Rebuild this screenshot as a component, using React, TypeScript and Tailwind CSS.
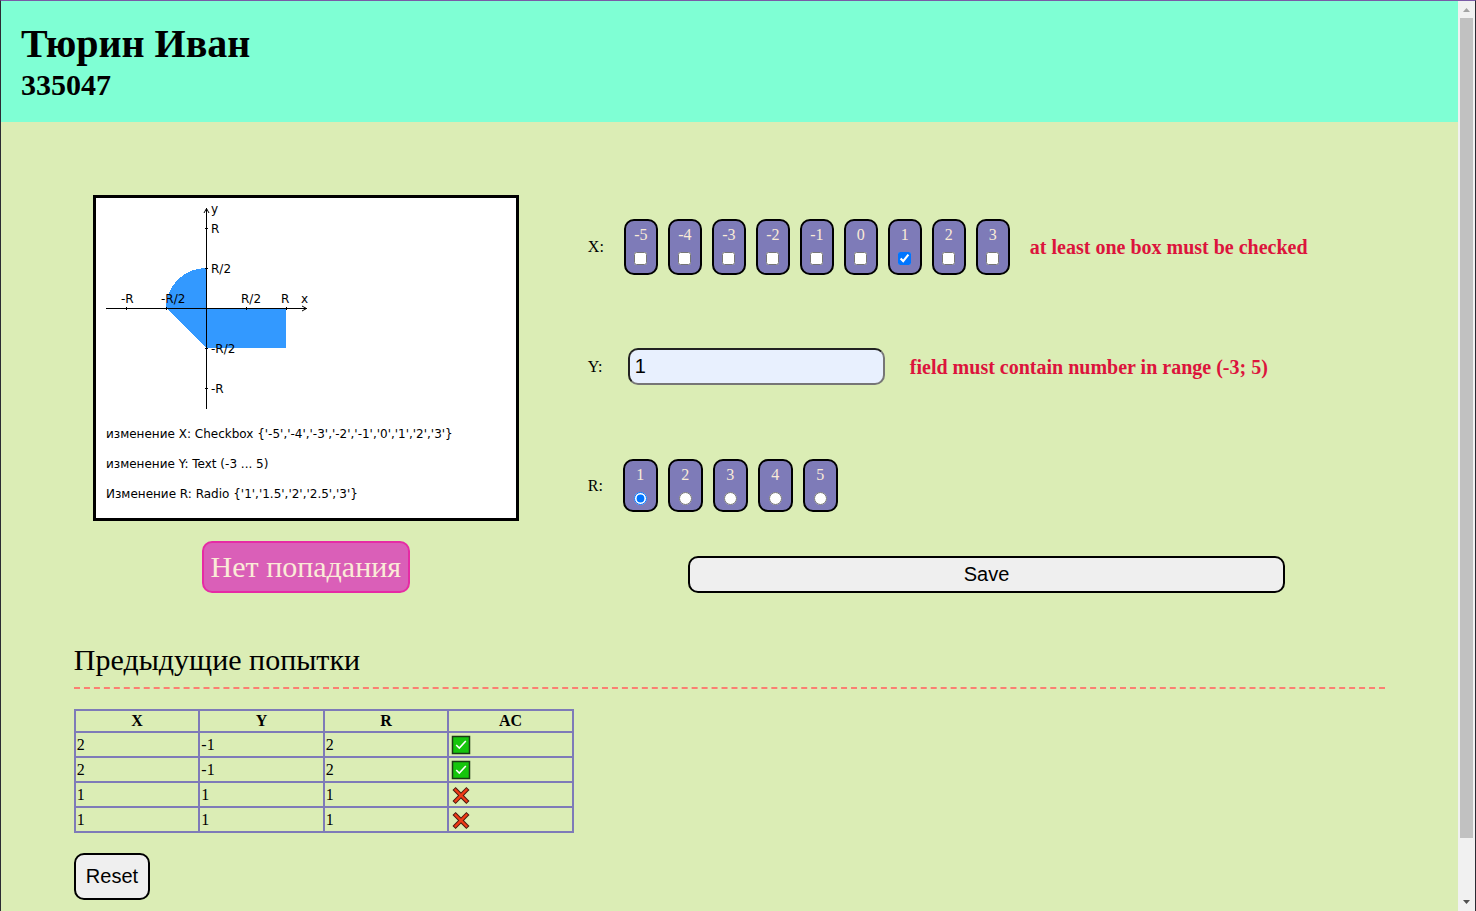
import { useState } from "react";

const X_VALUES = ["-5", "-4", "-3", "-2", "-1", "0", "1", "2", "3"];
const R_VALUES = ["1", "2", "3", "4", "5"];

const ATTEMPTS = [
  { x: "2", y: "-1", r: "2", hit: true },
  { x: "2", y: "-1", r: "2", hit: true },
  { x: "1", y: "1", r: "1", hit: false },
  { x: "1", y: "1", r: "1", hit: false },
];

function AreaChart() {
  return (
    <svg
      viewBox="0 0 420 320"
      width="420"
      height="320"
      role="img"
      aria-label="График области"
      className="block bg-white font-['DejaVu_Sans',sans-serif] text-[12px]"
    >
      <g fill="#3399ff" shapeRendering="crispEdges">
        <path d="M110 110V70A40 40 0 0 0 70 110Z" />
        <path d="M70 110H110V150Z" />
        <rect x="110" y="110" width="80" height="40" />
      </g>
      <g stroke="#000" fill="none" shapeRendering="crispEdges">
        <path d="M10 110.5H211M110.5 10V211" />
        <path d="M30.5 109V112M70.5 109V112M150.5 109V112M190.5 109V112" />
        <path d="M109 30.5H112M109 70.5H112M109 150.5H112M109 190.5H112" />
      </g>
      <path d="M206 108L210.500 110.500L206 113M108 15L110.500 10.500L113 15" stroke="#000" fill="none" />
      <g fill="#000">
        <text x="115" y="15">y</text>
        <text x="115" y="35">R</text>
        <text x="115" y="75">R/2</text>
        <text x="115" y="155">-R/2</text>
        <text x="115" y="195">-R</text>
        <text x="25" y="105">-R</text>
        <text x="65" y="105">-R/2</text>
        <text x="145" y="105">R/2</text>
        <text x="185" y="105">R</text>
        <text x="205" y="105">x</text>
        <text x="10" y="240">{"изменение X: Checkbox {'-5','-4','-3','-2','-1','0','1','2','3'}"}</text>
        <text x="10" y="270">изменение Y: Text (-3 ... 5)</text>
        <text x="10" y="300">{"Изменение R: Radio {'1','1.5','2','2.5','3'}"}</text>
      </g>
    </svg>
  );
}

function HitIcon() {
  return (
    <svg viewBox="0 0 20 20" width="20" height="20" role="img" aria-label="Да" className="ml-px block">
      <rect x="1.500" y="1.500" width="17" height="17" fill="#16c60c" stroke="#1c3a14" strokeWidth="1.500" />
      <path d="M5.200 10L8.300 13L14.800 6" fill="none" stroke="#fff" strokeWidth="1.600" />
    </svg>
  );
}

function MissIcon() {
  return (
    <svg viewBox="0 0 20 20" width="20" height="20" role="img" aria-label="Нет" className="ml-px block">
      <path d="M4.600 5L15.400 16M15.400 5L4.600 16" stroke="#4a1a10" strokeWidth="4.400" strokeLinecap="square" />
      <path d="M4.600 5L15.400 16M15.400 5L4.600 16" stroke="#f03a17" strokeWidth="2.400" strokeLinecap="square" />
    </svg>
  );
}

function Scrollbar() {
  return (
    <div aria-hidden="true" className="flex w-[17px] shrink-0 flex-col items-center bg-[#f1f1f1]">
      <svg viewBox="0 0 17 17" width="17" height="17" className="shrink-0">
        <path d="M5 11L8.500 7L12 11Z" fill="#a3a3a3" />
      </svg>
      <div className="h-[820px] w-[13px] bg-[#c1c1c1]" />
      <div className="flex-1" />
      <svg viewBox="0 0 17 17" width="17" height="17" className="shrink-0">
        <path d="M5 6L8.500 10L12 6Z" fill="#505050" />
      </svg>
    </div>
  );
}

export default function App() {
  const [xs, setXs] = useState<string[]>(["1"]);
  const [y, setY] = useState("1");
  const [r, setR] = useState("1");

  const toggleX = (v: string) =>
    setXs((cur) => (cur.includes(v) ? cur.filter((c) => c !== v) : [...cur, v]));

  return (
    <div className="flex h-screen border-x border-t border-x-[#2b2b33] border-t-[#7a5ba6] font-['Liberation_Serif',serif] text-base text-black">
      <div className="min-w-0 flex-1 overflow-y-auto bg-[#dbedb5] [scrollbar-width:none]">
        <header className="bg-[#7fffd4] p-5 font-bold">
          <h1 className="text-[40px] leading-[46px]">Тюрин Иван</h1>
          <h2 className="text-[30px] leading-[35px]">335047</h2>
        </header>

        <main className="px-[5%] pt-[73px] pb-[73px]">
          <div className="grid grid-cols-[464px_1fr] gap-[50px]">
            <section className="flex flex-col items-center gap-5">
              <div className="border-3 border-black">
                <AreaChart />
              </div>
              <p className="rounded-[10px] border-2 border-[#e62ba5] bg-[#da5fb8] px-[7px] py-[7px] text-[30px] leading-[34px] text-[#faebd7]">
                Нет попадания
              </p>
            </section>

            <form className="flex flex-col pt-6" onSubmit={(e) => e.preventDefault()}>
              <fieldset className="flex items-center">
                <span className="w-9">X:</span>
                <div className="flex gap-[10px]">
                  {X_VALUES.map((v) => (
                    <label
                      key={v}
                      className="flex h-14 w-[34px] flex-col items-center gap-2 rounded-[10px] border-2 border-black bg-[#7e7bb8] pt-[5px] leading-[18px] text-[#faebd7]"
                    >
                      {v}
                      <input type="checkbox" className="size-[13px]" checked={xs.includes(v)} onChange={() => toggleX(v)} />
                    </label>
                  ))}
                </div>
                <strong className="ml-5 text-[20px] text-[#dc143c]">at least one box must be checked</strong>
              </fieldset>

              <div className="mt-[73px] flex items-center">
                <label htmlFor="y" className="w-10">
                  Y:
                </label>
                <input
                  id="y"
                  type="text"
                  value={y}
                  onChange={(e) => setY(e.target.value)}
                  className="h-[37px] w-[257px] rounded-[10px] border-2 border-t-[#222222] border-r-[#767676] border-b-[#767676] border-l-[#222222] bg-[#e8f0fe] px-[5px] font-['Liberation_Sans',sans-serif] text-[20px]"
                />
                <strong className="ml-[25px] text-[20px] text-[#dc143c]">field must contain number in range (-3; 5)</strong>
              </div>

              <fieldset className="mt-[74px] flex items-center">
                <span className="w-[35px]">R:</span>
                <div className="flex gap-[10px]">
                  {R_VALUES.map((v) => (
                    <label
                      key={v}
                      className="flex h-[53px] w-[35px] flex-col items-center gap-2 rounded-[10px] border-2 border-black bg-[#7e7bb8] pt-[5px] leading-[18px] text-[#faebd7]"
                    >
                      {v}
                      <input type="radio" name="r" className="size-[13px]" checked={r === v} onChange={() => setR(v)} />
                    </label>
                  ))}
                </div>
              </fieldset>

              <button
                type="submit"
                className="mt-11 h-[37px] w-3/4 self-center rounded-[10px] border-2 border-black bg-[#efefef] pb-[2px] font-['Liberation_Sans',sans-serif] text-[20px]"
              >
                Save
              </button>
            </form>
          </div>

          <section className="mt-[50px]">
            <h3 className="border-b-2 border-dashed border-[#fa8072] pb-[10px] text-[30px] leading-[34px]">
              Предыдущие попытки
            </h3>
            <table className="mt-5 w-[500px] table-fixed border-collapse">
              <thead>
                <tr className="h-[22px]">
                  {["X", "Y", "R", "AC"].map((h) => (
                    <th key={h} className="border-2 border-[#7e7bb8] p-px leading-[18px]">
                      {h}
                    </th>
                  ))}
                </tr>
              </thead>
              <tbody>
                {ATTEMPTS.map((a, i) => (
                  <tr key={i} className="h-[25px]">
                    <td className="border-2 border-[#7e7bb8] p-px leading-[18px]">{a.x}</td>
                    <td className="border-2 border-[#7e7bb8] p-px leading-[18px]">{a.y}</td>
                    <td className="border-2 border-[#7e7bb8] p-px leading-[18px]">{a.r}</td>
                    <td className="border-2 border-[#7e7bb8] p-px leading-[18px]">{a.hit ? <HitIcon /> : <MissIcon />}</td>
                  </tr>
                ))}
              </tbody>
            </table>
            <button
              type="button"
              className="mt-5 h-[47px] rounded-[10px] border-2 border-black bg-[#efefef] px-[10px] pb-[2px] font-['Liberation_Sans',sans-serif] text-[20px]"
            >
              Reset
            </button>
          </section>
        </main>
      </div>
      <Scrollbar />
    </div>
  );
}
